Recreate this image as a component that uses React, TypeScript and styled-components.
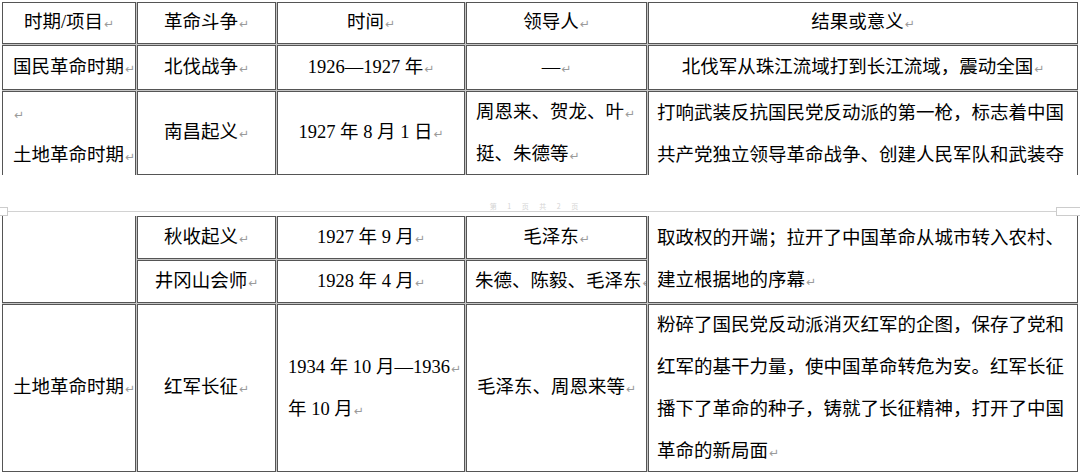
import React from "react";
import styled, { createGlobalStyle } from "styled-components";

const Global = createGlobalStyle`
  html, body { margin: 0; padding: 0; background: #ffffff; }
  body { font-family: "Liberation Serif", "Noto Sans CJK SC", serif; color: #000; }
`;

const Page = styled.div`
  width: 1080px;
  height: 474px;
  overflow: hidden;
  background: #fff;
  display: flex;
  flex-direction: column;
`;

const Sheet = styled.div<{ $rows: string; $top: number }>`
  display: grid;
  grid-template-columns: 134px 139px 188px 181px 430px;
  grid-template-rows: ${(p) => p.$rows};
  gap: 1px;
  background: #c6c6c6;
  margin: ${(p) => p.$top}px 0 0 2px;
  width: max-content;
`;

type CellProps = {
  $col: string;
  $row: string;
  $align?: "left" | "center";
  $valign?: "start" | "center";
  $pad?: number;
  $noTop?: boolean;
  $noBottom?: boolean;
};

const Cell = styled.div<CellProps>`
  grid-column: ${(p) => p.$col};
  grid-row: ${(p) => p.$row};
  background: #fff;
  border: 1px solid #555555;
  ${(p) => (p.$noTop ? "border-top: none;" : "")}
  ${(p) => (p.$noBottom ? "border-bottom: none;" : "")}
  display: flex;
  flex-direction: column;
  justify-content: ${(p) => (p.$valign === "start" ? "flex-start" : "center")};
  align-items: ${(p) => (p.$align === "left" ? "flex-start" : "center")};
  padding: 0 ${(p) => p.$pad ?? 9}px;
  font-size: 18.5px;
  line-height: 42px;
  color: #000;
  white-space: nowrap;
  overflow: hidden;
  min-width: 0;
  min-height: 0;
`;

const Line = styled.span`
  display: block;
  height: 42px;
  flex: none;
`;

const Text = styled.span`
  display: block;
  flex: none;
`;

const Mark = styled.span`
  color: #9a9a9a;
  font-family: "DejaVu Sans", sans-serif;
  font-size: 12px;
  margin-left: 1px;
`;

const Gap = styled.div`
  height: 41px;
  display: flex;
  flex-direction: column;
  justify-content: flex-end;
`;

const FooterText = styled.div`
  font-family: "Noto Sans CJK SC", sans-serif;
  font-size: 7px;
  line-height: 8px;
  color: #d4d4d4;
  text-align: center;
  word-spacing: 9px;
  margin-bottom: -3px;
  padding-right: 12px;
`;

const RuleRow = styled.div`
  height: 9px;
  display: flex;
  align-items: center;
`;

const CornerMark = styled.div<{ $w: number; $side: "left" | "right" }>`
  width: ${(p) => p.$w}px;
  height: 9px;
  box-sizing: border-box;
  border: 1px solid #cccccc;
  ${(p) => (p.$side === "left" ? "border-left: none;" : "border-right: none;")}
`;

const Rule = styled.div`
  flex: 1;
  height: 1px;
  background: #d2d2d2;
`;

const P = ({ children }: { children?: React.ReactNode }) => (
  <Text>
    {children}
    <Mark>↵</Mark>
  </Text>
);

export default function App() {
  return (
    <Page>
      <Global />
      <Sheet $rows="42px 45px 84px" $top={2}>
        <Cell $col="1" $row="1"><P>时期/项目</P></Cell>
        <Cell $col="2" $row="1"><P>革命斗争</P></Cell>
        <Cell $col="3" $row="1"><P>时间</P></Cell>
        <Cell $col="4" $row="1"><P>领导人</P></Cell>
        <Cell $col="5" $row="1"><P>结果或意义</P></Cell>

        <Cell $col="1" $row="2" $align="left" $pad={10}><P>国民革命时期</P></Cell>
        <Cell $col="2" $row="2"><P>北伐战争</P></Cell>
        <Cell $col="3" $row="2"><P>1926—1927 年</P></Cell>
        <Cell $col="4" $row="2"><P>—</P></Cell>
        <Cell $col="5" $row="2"><P>北伐军从珠江流域打到长江流域，震动全国</P></Cell>

        <Cell $col="1" $row="3" $align="left" $valign="start" $pad={10} $noBottom>
          <Line><P /></Line>
          <Line><P>土地革命时期</P></Line>
        </Cell>
        <Cell $col="2" $row="3"><P>南昌起义</P></Cell>
        <Cell $col="3" $row="3"><P>1927 年 8 月 1 日</P></Cell>
        <Cell $col="4" $row="3" $align="left">
          <Line><P>周恩来、贺龙、叶</P></Line>
          <Line><P>挺、朱德等</P></Line>
        </Cell>
        <Cell $col="5" $row="3" $align="left" $valign="start" $pad={8} $noBottom>
          <Line>打响武装反抗国民党反动派的第一枪，标志着中国</Line>
          <Line>共产党独立领导革命战争、创建人民军队和武装夺</Line>
        </Cell>
      </Sheet>

      <Gap>
        <FooterText>第 1 页 共 2 页</FooterText>
        <RuleRow>
          <CornerMark $w={8} $side="left" />
          <Rule />
          <CornerMark $w={24} $side="right" />
        </RuleRow>
      </Gap>

      <Sheet $rows="43px 43px 168px" $top={0}>
        <Cell $col="1" $row="1 / span 2" $noTop />
        <Cell $col="2" $row="1"><P>秋收起义</P></Cell>
        <Cell $col="3" $row="1"><P>1927 年 9 月</P></Cell>
        <Cell $col="4" $row="1"><P>毛泽东</P></Cell>
        <Cell $col="5" $row="1 / span 2" $align="left" $pad={8} $noTop>
          <Line>取政权的开端；拉开了中国革命从城市转入农村、</Line>
          <Line><P>建立根据地的序幕</P></Line>
        </Cell>

        <Cell $col="2" $row="2"><P>井冈山会师</P></Cell>
        <Cell $col="3" $row="2"><P>1928 年 4 月</P></Cell>
        <Cell $col="4" $row="2" $align="left" $pad={8}><P>朱德、陈毅、毛泽东</P></Cell>

        <Cell $col="1" $row="3" $align="left" $pad={10}><P>土地革命时期</P></Cell>
        <Cell $col="2" $row="3"><P>红军长征</P></Cell>
        <Cell $col="3" $row="3" $align="left" $pad={10}>
          <Line><P>1934 年 10 月—1936</P></Line>
          <Line><P>年 10 月</P></Line>
        </Cell>
        <Cell $col="4" $row="3"><P>毛泽东、周恩来等</P></Cell>
        <Cell $col="5" $row="3" $align="left" $pad={8}>
          <Line>粉碎了国民党反动派消灭红军的企图，保存了党和</Line>
          <Line>红军的基干力量，使中国革命转危为安。红军长征</Line>
          <Line>播下了革命的种子，铸就了长征精神，打开了中国</Line>
          <Line><P>革命的新局面</P></Line>
        </Cell>
      </Sheet>
    </Page>
  );
}
